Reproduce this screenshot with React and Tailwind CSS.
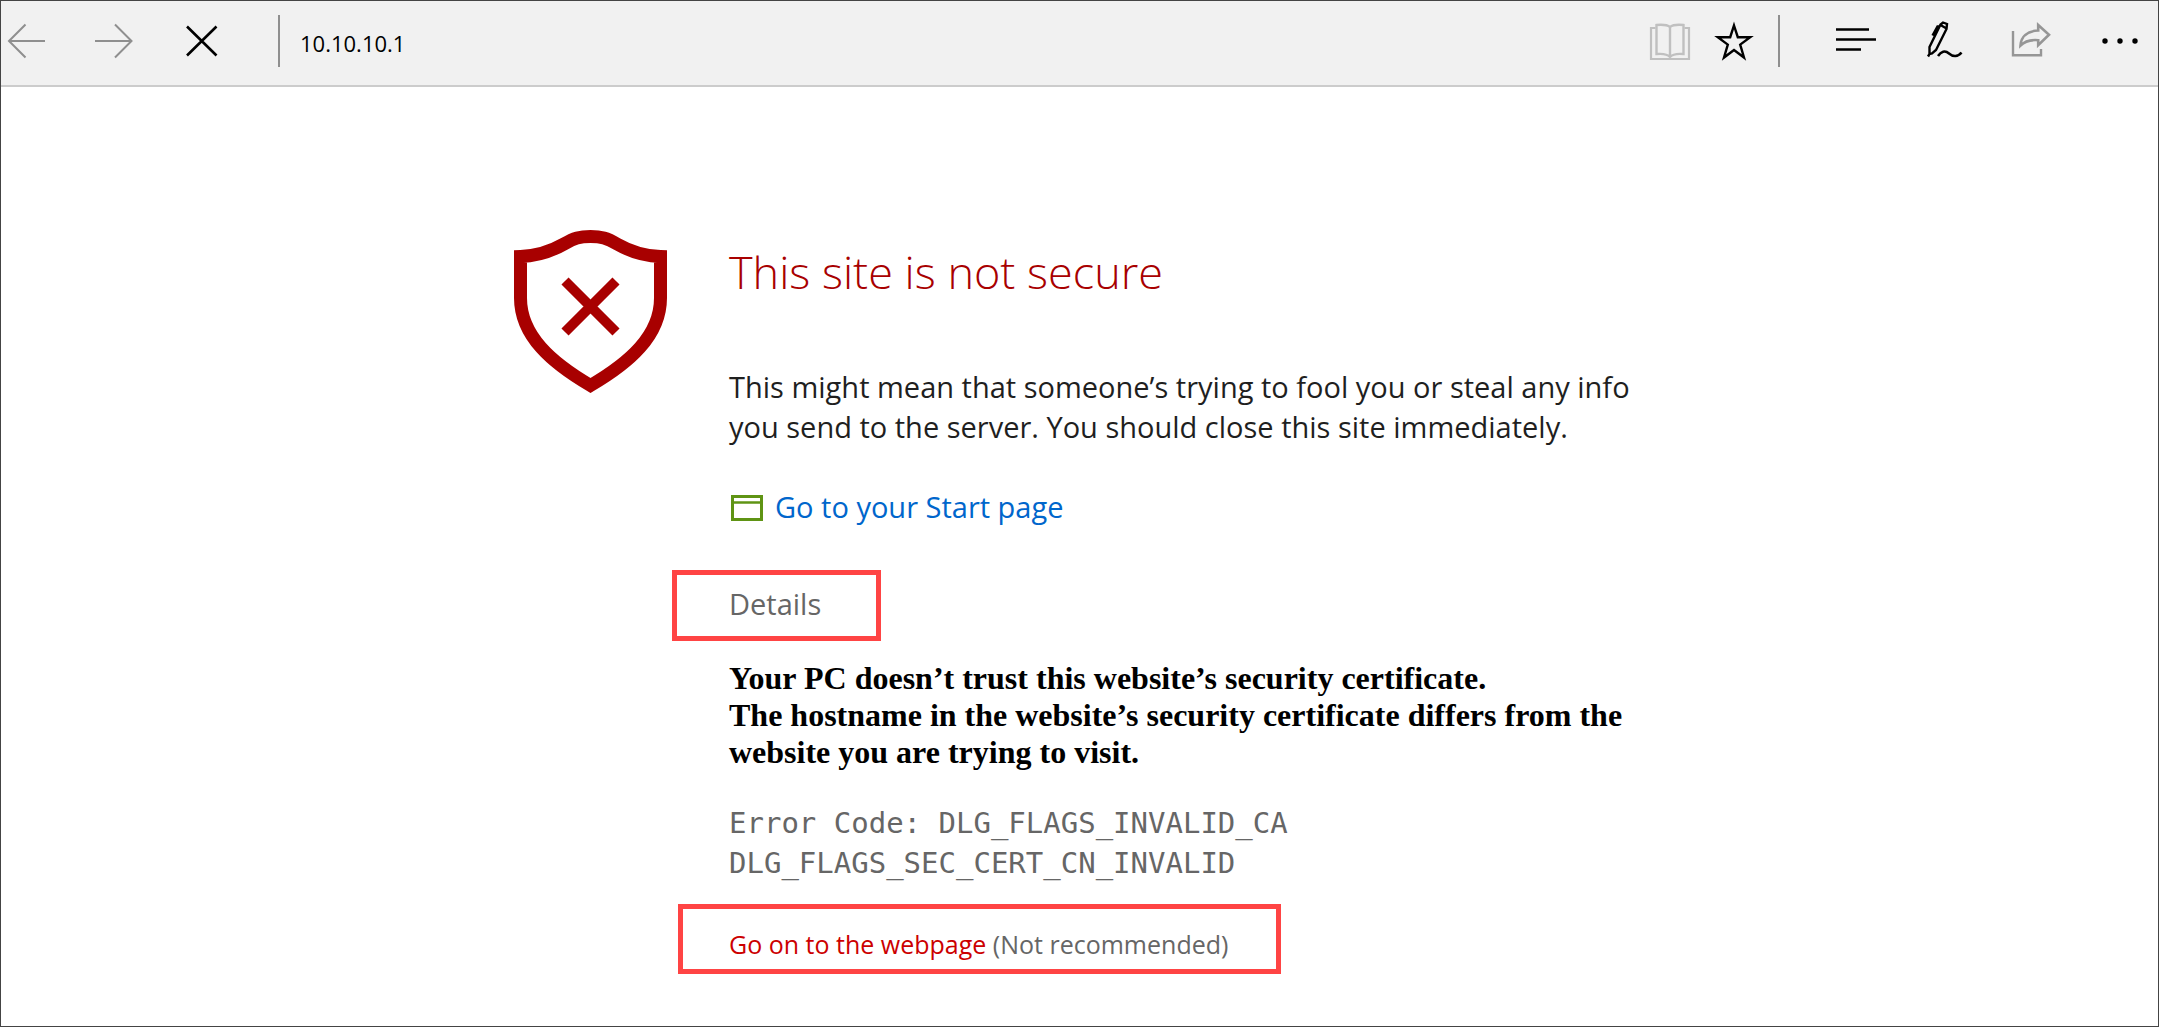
import React from "react";

function ToolButton({ label, disabled, className = "", children }) {
  return (
    <button type="button" aria-label={label} disabled={disabled} className={`size-10 shrink-0 ${className}`}>
      <svg viewBox="0 0 40 40" fill="none" stroke="currentColor" className="size-10 overflow-visible" aria-hidden="true">
        {children}
      </svg>
    </button>
  );
}

function Divider() {
  return <span className="h-13 w-0.5 shrink-0 bg-[#8f8f8f]" />;
}

function Toolbar() {
  return (
    <header className="flex h-[86px] items-center border-b-2 border-[#cccccc] bg-[#f1f1f1] pr-[18px] pb-1 pl-[7px] text-black">
      <nav aria-label="Navigation" className="flex items-center gap-12">
        <ToolButton label="Back" disabled className="text-[#8f8f8f]">
          <path d="M17.5 3.5 1 20l16.500 16.500M1 20h36" strokeWidth="2" />
        </ToolButton>
        <ToolButton label="Forward" disabled className="text-[#8f8f8f]">
          <path d="M19 3.500 35.500 20 19 36.500M35.500 20H-1" strokeWidth="2" />
        </ToolButton>
        <ToolButton label="Stop">
          <path d="M3 5.500 32.500 34.500M32.500 5.500 3 34.500" strokeWidth="2.6" />
        </ToolButton>
      </nav>
      <div className="ml-[54px] flex flex-1 items-center">
        <Divider />
        <input
          type="text"
          aria-label="Address"
          defaultValue="10.10.10.1"
          className="ml-5 h-11 min-w-0 flex-1 bg-transparent pt-1 text-[22px] outline-none"
        />
      </div>
      <div className="flex items-center gap-6">
        <ToolButton label="Reading view" disabled className="text-[#c0c0c0]">
          <path d="M5.500 7H1v31h38V7h-4.500" strokeWidth="2.200" />
          <path d="M20 6C17 3.500 12 3.500 6.500 4v29c5.500-.5 10.500-.5 13.500 3 3-3.500 8-3.500 13.500-3V4C28 3.500 23 3.500 20 6Zm0 0v30" strokeWidth="2.4" />
        </ToolButton>
        <ToolButton label="Add to favorites">
          <path d="M20 4.500 23.800 16.200H36.200L26.200 23.600 30 36.500 20 29 10 36.500 13.800 23.600 3.800 16.200H16.200Z" strokeWidth="2.4" />
        </ToolButton>
        <Divider />
      </div>
      <div className="ml-14 flex items-center gap-12">
        <ToolButton label="Hub">
          <path d="M0 8.500h33M0 18.500h40M0 28.500h25" strokeWidth="2.6" />
        </ToolButton>
        <ToolButton label="Make a web note">
          <path d="M5.500 33V26L16.500 3.500 19 1.500 23 3 22.500 8 12 29 8 32.500ZM16.500 4l6 3.500M16 5.500 13.500 5.500 8.500 14.500M6.500 31.500 4 35.500" strokeWidth="2.4" />
          <path d="M14 35C17 30.500 21 29 25 32.500S34 36 37.500 31.500" strokeWidth="2.5" />
        </ToolButton>
        <ToolButton label="Share" disabled className="text-[#969696]">
          <path d="M1 10v24.200H29V28" strokeWidth="2.400" />
          <path d="M26.200 4 37 13.800 26.200 24.200V19.200C18 18.500 12.500 20.500 8.500 24.500 9 16 15 10 26.200 9.500Z" strokeWidth="2.600" />
        </ToolButton>
        <ToolButton label="More">
          <g fill="currentColor" stroke="none">
            <circle cx="5" cy="20" r="2.700" />
            <circle cx="20" cy="20" r="2.700" />
            <circle cx="35" cy="20" r="2.700" />
          </g>
        </ToolButton>
      </div>
    </header>
  );
}

function ShieldIcon() {
  return (
    <svg viewBox="0 0 153 163" fill="none" stroke="#a80000" strokeWidth="13" className="w-[153px] shrink-0 self-start" aria-hidden="true">
      <path d="M6.500 26.500C23 26 36 22 50 14 60 8 66 6.500 76.500 6.500S93 8 103 14C117 22 130 26 146.500 26.500V68C146.500 106 115 133 76.500 155.500 38 133 6.500 106 6.500 68Z" />
      <path d="M51 51 102 102M102 51 51 102" strokeWidth="10" />
    </svg>
  );
}

function StartPageIcon() {
  return (
    <svg viewBox="0 0 32 26" fill="none" stroke="#5f9414" className="mt-0.5 w-8" aria-hidden="true">
      <path d="M1.500 1.500h29v23h-29Z" strokeWidth="3" />
      <path d="M1 7.500h30" strokeWidth="2.500" />
    </svg>
  );
}

export default function App() {
  return (
    <div className="flex min-h-screen flex-col border border-[#444444] bg-white font-['Open_Sans','Noto_Sans',sans-serif]">
      <Toolbar />
      <main className="mx-auto flex w-full max-w-[1131px] gap-[62px] pt-[143px] pb-12">
        <ShieldIcon />
        <div className="min-w-0 flex-1 text-[29px] leading-10 text-[#1f1f1f]">
          <h1 className="mt-2.5 text-[45px] leading-16 font-light text-[#a80000]">
            This site is not secure
          </h1>
          <p className="mt-[63px]">
            This might mean that someone’s trying to fool you or steal any info
            <br />
            you send to the server. You should close this site immediately.
          </p>
          <a href="#start" className="mt-10 ml-0.5 flex w-fit items-center gap-3 text-[#0066cc]">
            <StartPageIcon />
            Go to your Start page
          </a>
          <button
            type="button"
            aria-expanded="true"
            className="mt-[43px] -ml-[57px] block w-[209px] border-5 border-[#ff4444] pt-[9px] pb-3 pl-[52px] text-left text-[#666666]"
          >
            Details
          </button>
          <p className="mt-[19px] font-['Liberation_Serif',serif] text-[32px] leading-[37px] font-bold text-black">
            Your PC doesn’t trust this website’s security certificate.
            <br />
            The hostname in the website’s security certificate differs from the
            <br />
            website you are trying to visit.
          </p>
          <p className="mt-8 font-['DejaVu_Sans_Mono',monospace] text-[29px] text-[#666666]">
            Error Code: DLG_FLAGS_INVALID_CA
            <br />
            DLG_FLAGS_SEC_CERT_CN_INVALID
          </p>
          <p className="mt-[21px] -ml-[51px] w-[603px] border-5 border-[#ff4444] pt-[17px] pb-[7px] pl-[46px] text-[25px] leading-9 text-[#666666]">
            <a href="#continue" className="text-[#cc0000]">Go on to the webpage</a> (Not recommended)
          </p>
        </div>
      </main>
    </div>
  );
}
